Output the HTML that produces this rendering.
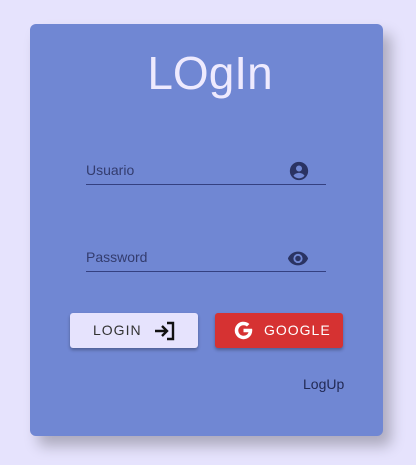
<!DOCTYPE html>
<html><head><meta charset="utf-8"><style>
html,body{margin:0;padding:0}
body{width:416px;height:465px;background:#e6e3fd;position:relative;overflow:hidden;font-family:"Comic Sans MS","Liberation Sans",sans-serif}
.card{position:absolute;left:30px;top:24px;width:353px;height:412px;background:#7087d3;border-radius:6px;box-shadow:8px 10px 14px rgba(0,0,0,0.25)}
.title{position:absolute;left:0;right:0;text-align:center;font-size:46px;color:#eeeafe;letter-spacing:0px;font-weight:300;line-height:60px}
.field{position:absolute;left:86px;width:240px;border-bottom:1px solid #344080;height:24px}
.field span{position:absolute;left:0;top:2px;font-size:14px;color:#333c6e}
.field svg{position:absolute;right:16px;top:0}
.btn{position:absolute;top:313px;height:35px;border-radius:3px;box-shadow:0 2px 3px rgba(0,0,0,0.3);font-size:14px;letter-spacing:1px}
</style></head><body>
<div class="card"></div>
<div class="title" style="top:43px;left:4px">LOgIn</div>
<div class="field" style="top:160px"><span>Usuario</span>
<svg width="22" height="22" viewBox="0 0 24 24"><path fill="#2a3363" d="M12 2a10 10 0 1 0 0 20 10 10 0 0 0 0-20zm0 4a3.3 3.3 0 1 1 0 6.6A3.3 3.3 0 0 1 12 6zm0 14a8 8 0 0 1-6-2.8c.8-2 3.7-3.2 6-3.2s5.2 1.2 6 3.2A8 8 0 0 1 12 20z"/></svg></div>
<div class="field" style="top:247px"><span>Password</span>
<svg width="24" height="22" viewBox="0 0 24 24"><path fill="#2a3363" d="M12 5C7 5 2.7 8.1 1 12.5 2.7 16.9 7 20 12 20s9.3-3.1 11-7.5C21.3 8.1 17 5 12 5zm0 12.5a5 5 0 1 1 0-10 5 5 0 0 1 0 10zm0-8a3 3 0 1 0 0 6 3 3 0 0 0 0-6z"/></svg></div>
<div class="btn" style="left:70px;width:128px;background:#e6e3fd;color:#333">
<span style="position:absolute;left:23px;top:9px">LOGIN</span>
<svg style="position:absolute;left:84px;top:8px" width="21" height="20" viewBox="0 0 21 20"><path d="M1 10h11M8 5l5 5-5 5M13 2h6v16h-6" fill="none" stroke="#111" stroke-width="2.4"/></svg></div>
<div class="btn" style="left:215px;width:128px;background:#d63232;color:#fff">
<svg style="position:absolute;left:18px;top:7px" width="21" height="21" viewBox="0 0 24 24"><path fill="#fff" d="M12 10v4h5.7c-.6 2.3-2.7 4-5.7 4a6 6 0 1 1 3.9-10.6l2.9-2.8A10 10 0 1 0 22 12c0-.7 0-1.3-.2-2z"/></svg>
<span style="position:absolute;left:49px;top:9px">GOOGLE</span></div>
<div style="position:absolute;left:303px;top:376px;font-size:14px;color:#222a55">LogUp</div>
</body></html>
